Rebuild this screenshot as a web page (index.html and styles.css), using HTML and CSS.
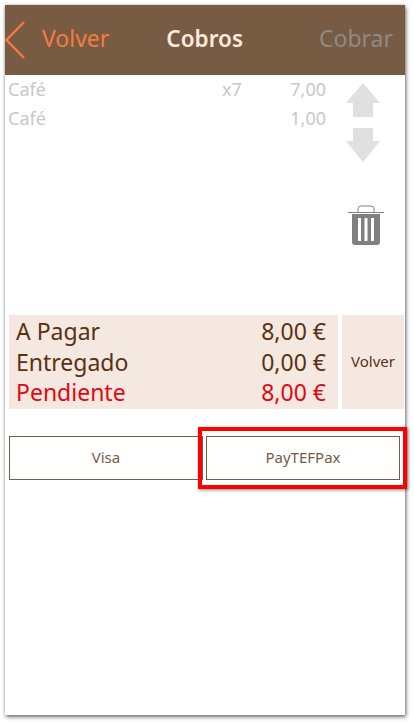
FILE: index.html
```html
<!DOCTYPE html>
<html lang="en">
<head>
  <meta charset="UTF-8">
  <title>Cobros</title>
  <link rel="stylesheet" href="styles.css">
</head>
<body>
  <div class="phone">
    <div class="top-bar">
      <a class="back-btn">
        <svg class="back-icon" width="20" height="38" viewBox="0 0 20 38">
          <path d="M19 1 L1.5 19 L19 37" fill="none" stroke="#f47c43" stroke-width="2.4"/>
        </svg>
        <span>Volver</span>
      </a>
      <div class="title">Cobros</div>
      <div class="charge">Cobrar</div>
    </div>

    <div class="lines-area">
      <div class="lines">
        <div class="line">
          <span class="line-name">Café</span>
          <span class="line-qty">x7</span>
          <span class="line-price">7,00</span>
        </div>
        <div class="line">
          <span class="line-name">Café</span>
          <span class="line-qty"></span>
          <span class="line-price">1,00</span>
        </div>
      </div>
      <div class="line-tools">
        <svg class="arrow" width="34" height="34" viewBox="0 0 34 34">
          <path d="M17 0 L34 20 L27 20 L27 34 L7 34 L7 20 L0 20 Z" fill="#e0e0e0"/>
        </svg>
        <svg class="arrow" width="34" height="34" viewBox="0 0 34 34">
          <path d="M7 0 L27 0 L27 13 L34 13 L17 34 L0 13 L7 13 Z" fill="#e0e0e0"/>
        </svg>
        <svg class="trash" width="36" height="42" viewBox="0 0 36 42">
          <path d="M0 7.5 H36" stroke="#808080" stroke-width="1" fill="none"/>
          <path d="M10 7 V4 Q10 1 13 1 H23 Q26 1 26 4 V7" stroke="#808080" stroke-width="1" fill="none"/>
          <path d="M4 9 H32 V37 Q32 40 29 40 H7 Q4 40 4 37 Z" fill="#808080"/>
          <path d="M10 13 H13 V36 H10 Z M16.5 13 H19.5 V36 H16.5 Z M23 13 H26 V36 H23 Z" fill="#fff"/>
        </svg>
      </div>
    </div>

    <div class="summary">
      <div class="totals">
        <div class="total-row"><span>A Pagar</span><span>8,00 €</span></div>
        <div class="total-row"><span>Entregado</span><span>0,00 €</span></div>
        <div class="total-row pending"><span>Pendiente</span><span>8,00 €</span></div>
      </div>
      <div class="back-box">Volver</div>
    </div>

    <div class="pay-row">
      <div class="pay-btn">Visa</div>
      <div class="pay-btn highlighted">PayTEFPax</div>
    </div>
  </div>
</body>
</html>
```

FILE: styles.css
```css
html, body {
  margin: 0;
  padding: 0;
  background-color: #fff;
}

body {
  width: 414px;
  height: 724px;
  padding: 5px 9px 9px 5px;
  box-sizing: border-box;
  font-family: "Noto Sans", sans-serif;
  overflow: hidden;
}

.phone {
  height: 710px;
  background-color: #fff;
  box-shadow: 1px 2px 4px rgba(0, 0, 0, 0.55), 0 0 3px rgba(0, 0, 0, 0.2);
}

.top-bar {
  height: 70px;
  background-color: #775b43;
  display: flex;
  align-items: center;
}

.back-btn {
  display: flex;
  align-items: center;
  color: #f47c43;
  font-size: 23px;
}

.back-btn span {
  margin-left: 17px;
  padding-bottom: 4px;
}

.title {
  margin-left: 57px;
  padding-bottom: 4px;
  color: #fbe9da;
  font-size: 22.5px;
  font-weight: 600;
}

.charge {
  margin-left: auto;
  margin-right: 12px;
  padding-bottom: 4px;
  color: #8f8a84;
  font-size: 23px;
}

.lines-area {
  height: 240px;
  display: flex;
  justify-content: space-between;
}

.lines {
  width: 318px;
  margin-left: 3px;
}

.line {
  height: 29px;
  display: flex;
  align-items: center;
  color: #c8c8c8;
  font-size: 18px;
  padding-bottom: 2px;
  box-sizing: border-box;
}

.line-name {
  flex: 1;
}

.line-qty {
  width: 54px;
}

.line-price {
  width: 50px;
  text-align: right;
}

.line-tools {
  width: 65px;
  margin-right: 10px;
  display: flex;
  flex-direction: column;
  align-items: center;
  padding-top: 8px;
}

.arrow + .arrow {
  margin-top: 11px;
}

.trash {
  margin-top: 43px;
  margin-left: 6px;
}

.summary {
  display: flex;
  gap: 4px;
  margin: 0 1px 0 4px;
  height: 94px;
}

.totals {
  width: 329px;
  background-color: #f4e8e0;
  color: #5a3112;
  font-size: 23px;
  padding: 1px 12px 0 7px;
  box-sizing: border-box;
}

.total-row {
  height: 30.5px;
  display: flex;
  justify-content: space-between;
  align-items: center;
}

.pending {
  color: #e30613;
}

.back-box {
  flex: 1;
  background-color: #f4e8e0;
  color: #5a3112;
  font-size: 15px;
  padding-bottom: 2px;
  display: flex;
  align-items: center;
  justify-content: center;
}

.pay-row {
  display: flex;
  gap: 3px;
  margin: 27px 0 0 4px;
}

.pay-btn {
  width: 194px;
  height: 44px;
  padding-bottom: 2px;
  box-sizing: border-box;
  border: 1px solid #775b43;
  color: #775b43;
  font-size: 15px;
  display: flex;
  align-items: center;
  justify-content: center;
}

.highlighted {
  position: relative;
}

.highlighted::after {
  content: "";
  position: absolute;
  left: -9px;
  right: -8px;
  top: -10px;
  bottom: -10px;
  border: 4px solid #f00;
  box-shadow: 1px 1px 3px rgba(0, 0, 0, 0.5);
}
```
